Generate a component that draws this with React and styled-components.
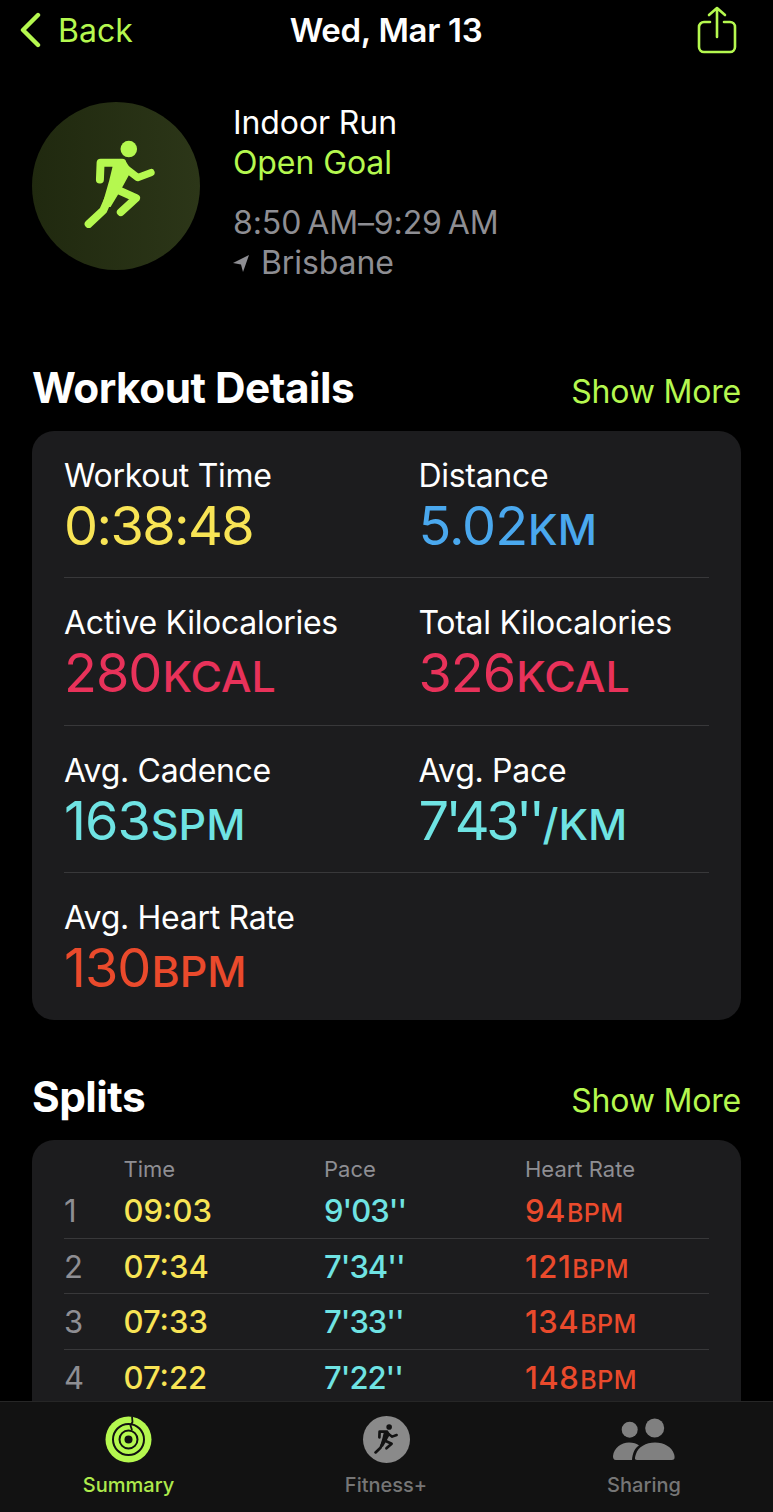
import React from 'react';
import styled, { createGlobalStyle } from 'styled-components';

const lime = '#b5f84f';
const yellow = '#f8e455';
const blue = '#4aa8ee';
const pink = '#e8325a';
const cyan = '#6fe3e3';
const orange = '#ea4a2c';

const GlobalStyle = createGlobalStyle`
  html, body { margin: 0; padding: 0; background: #000; }
  body { font-family: Inter, "Liberation Sans", sans-serif; -webkit-font-smoothing: antialiased; }
`;

const Page = styled.div`
  width: 773px;
  height: 1512px;
  display: flex;
  flex-direction: column;
  overflow: hidden;
  background: #000;
  color: #fff;
`;

const Scroll = styled.div`
  flex: 1;
  min-height: 0;
  overflow: hidden;
  padding: 0 32px;
`;

const NavBar = styled.div`
  height: 60px;
  margin: 0 -32px 2px;
  padding: 0 36px 0 19px;
  display: grid;
  grid-template-columns: 1fr auto 1fr;
  align-items: center;
`;

const BackLink = styled.div`
  display: flex;
  align-items: center;
  gap: 17px;
  color: ${lime};
  font-size: 32px;
`;

const NavTitle = styled.div`
  font-size: 33px;
  font-weight: 600;
  letter-spacing: -0.3px;
  margin-left: 16px;
`;

const ShareBox = styled.div`
  justify-self: end;
  display: flex;
`;

const Hero = styled.div`
  display: flex;
  gap: 33px;
  margin-top: 40px;
  padding-top: 2px;
`;

const Badge = styled.div`
  width: 168px;
  height: 168px;
  box-sizing: border-box;
  padding: 0 0 4px 6px;
  border-radius: 50%;
  background: linear-gradient(90deg, #20290f, #2c3618);
  display: flex;
  align-items: center;
  justify-content: center;
`;

const HeroText = styled.div`
  display: flex;
  flex-direction: column;
  padding-top: 1px;
`;

const HeroLine = styled.div`
  font-size: 32px;
  line-height: 40px;
  letter-spacing: -0.1px;
  word-spacing: ${(p) => p.$words || 0}px;
  color: ${(p) => p.$color || '#fff'};
  margin-top: ${(p) => p.$gap || 0}px;
  display: flex;
  align-items: center;
  gap: 12px;
`;

const SectionHead = styled.div`
  display: flex;
  justify-content: space-between;
  align-items: center;
  height: 48px;
  margin-top: ${(p) => p.$top}px;
  margin-bottom: 20px;
`;

const SectionTitle = styled.h2`
  margin: 0;
  font-size: 42.3px;
  font-weight: 700;
  letter-spacing: -0.5px;
`;

const ShowMore = styled.div`
  color: ${lime};
  font-size: 32px;
  letter-spacing: -0.2px;
  padding-top: 8px;
`;

const Card = styled.div`
  background: #1c1c1e;
  border-radius: 22px;
  padding: 0 32px ${(p) => p.$bottom || 0}px;
`;

const MetricRow = styled.div`
  display: grid;
  grid-template-columns: 354.5px 1fr;
  height: 147.25px;
  padding-top: 23px;
  box-sizing: border-box;
  border-bottom: ${(p) => (p.$last ? 'none' : '1px solid #38383a')};
`;

const Metric = styled.div`
  display: flex;
  flex-direction: column;
`;

const MetricLabel = styled.div`
  font-size: 32px;
  line-height: 43px;
  letter-spacing: -0.3px;
  color: #fff;
`;

const MetricValue = styled.div`
  font-size: 54px;
  line-height: 58px;
  letter-spacing: ${(p) => p.$track || -1}px;
  color: ${(p) => p.$color};
`;

const MetricUnit = styled.span`
  font-size: 43px;
  font-weight: 500;
  letter-spacing: 0;
  margin-left: 1px;
`;

const SplitHead = styled.div`
  display: grid;
  grid-template-columns: 59.5px 200.5px 201px 1fr;
  height: 43px;
  padding-bottom: 1px;
  box-sizing: border-box;
  align-items: end;
  font-size: 22px;
  color: #8e8e93;
`;

const SplitRow = styled.div`
  display: grid;
  grid-template-columns: 59.5px 200.5px 201px 1fr;
  align-items: center;
  height: 55.5px;
  padding-top: 1px;
  box-sizing: border-box;
  border-bottom: 1px solid #38383a;
  font-size: 31px;
`;

const SplitIndex = styled.div`
  color: #8e8e93;
`;

const SplitCell = styled.div`
  color: ${(p) => p.$color};
  font-weight: 500;
  letter-spacing: ${(p) => p.$track || 0}px;
`;

const SplitUnit = styled.span`
  font-size: 25px;
  font-weight: 500;
  margin-left: 1px;
`;

const TabBar = styled.div`
  height: 111px;
  flex-shrink: 0;
  background: #121212;
  border-top: 1px solid #262626;
  box-sizing: border-box;
  display: grid;
  grid-template-columns: 257px 258px 258px;
`;

const Tab = styled.div`
  display: flex;
  flex-direction: column;
  align-items: center;
  padding-top: 12px;
  color: ${(p) => (p.$active ? '#aeea4c' : '#767676')};
  font-size: 20px;
  font-weight: 500;
`;

const TabIcon = styled.div`
  height: 50px;
  display: flex;
  align-items: center;
  justify-content: center;
  margin-bottom: 9px;
`;

const TabDisc = styled.div`
  width: 47px;
  height: 47px;
  border-radius: 50%;
  background: #8a8a8a;
  display: flex;
  align-items: center;
  justify-content: center;
`;

const Chevron = () => (
  <svg width="22" height="36" viewBox="0 0 22 36" fill="none" stroke={lime} strokeWidth="4.4" strokeLinecap="round" strokeLinejoin="round">
    <path d="M19 3 L4 18 L19 33" />
  </svg>
);

const ShareIcon = () => (
  <svg width="40" height="48" viewBox="0 0 40 48" fill="none" stroke={lime} strokeWidth="2.6" strokeLinecap="round" strokeLinejoin="round">
    <path d="M13 16 H7 a5 5 0 0 0 -5 5 V41 a5 5 0 0 0 5 5 H33 a5 5 0 0 0 5 -5 V21 a5 5 0 0 0 -5 -5 H27" />
    <path d="M20 31 V2 M12 9 L20 2 L28 9" />
  </svg>
);

const Runner = ({ size, color }) => (
  <svg width={size} height={size * 1.25} viewBox="190 133 214 267" fill="none" stroke={color} strokeLinecap="round" strokeLinejoin="round">
    <circle cx="325" cy="160" r="25" fill={color} stroke="none" />
    <path d="M238 252 L240 201 H305" strokeWidth="24" />
    <path d="M312 215 L352 246 L392 231" strokeWidth="22" />
    <path d="M272 200 L315 195 L333 225 L300 285 L270 335 L243 335 L266 255 L276 213 Z" fill={color} stroke="none" />
    <path d="M268 300 L248 345 L204 386" strokeWidth="24" />
    <path d="M285 280 L347 308 L301 350" strokeWidth="24" />
  </svg>
);

const LocationArrow = () => (
  <svg width="16" height="17" viewBox="0 0 16 17" fill="#8e8e93">
    <path d="M16 0 L0 8 L8 9.5 L10 17 Z" />
  </svg>
);

const RingsIcon = () => (
  <svg width="47" height="47" viewBox="0 0 47 47">
    <circle cx="23.5" cy="23.5" r="23" fill={lime} />
    <circle cx="23.5" cy="23.5" r="15.5" fill="none" stroke="#121212" strokeWidth="2" />
    <circle cx="23.5" cy="23.5" r="9" fill="none" stroke="#121212" strokeWidth="2" />
    <circle cx="23.5" cy="23.5" r="4" fill="#121212" />
    <path d="M27 0.5 L27.5 6 L25.5 9.5 L27 14" fill="none" stroke="#121212" strokeWidth="1.8" />
  </svg>
);

const PeopleIcon = () => (
  <svg width="62" height="42" viewBox="0 0 62 42" fill="#808080">
    <circle cx="16.7" cy="11.7" r="8" />
    <circle cx="41.7" cy="10" r="9.5" />
    <path d="M3 42 C0.5 42 0 40 0 38 C1 30 8 24.5 16 24.5 C20 24.5 24 25.5 26 27.5 C22 30 19.5 35 19 42 Z" />
    <path d="M24 42 C21 42 22 39 23 36 C25 29 33 24.5 42 24.5 C51 24.5 59 29 61 36 C62 39 62 42 59 42 Z" />
  </svg>
);

const metrics = [
  [
    { label: 'Workout Time', value: '0:38:48', color: yellow, track: -1.6 },
    { label: 'Distance', value: '5.02', unit: 'KM', color: blue },
  ],
  [
    { label: 'Active Kilocalories', value: '280', unit: 'KCAL', color: pink },
    { label: 'Total Kilocalories', value: '326', unit: 'KCAL', color: pink },
  ],
  [
    { label: 'Avg. Cadence', value: '163', unit: 'SPM', color: cyan },
    { label: 'Avg. Pace', value: "7'43''", unit: '/KM', color: cyan, track: -3.5 },
  ],
  [{ label: 'Avg. Heart Rate', value: '130', unit: 'BPM', color: orange }],
];

const splits = [
  ['1', '09:03', "9'03''", '94'],
  ['2', '07:34', "7'34''", '121'],
  ['3', '07:33', "7'33''", '134'],
  ['4', '07:22', "7'22''", '148'],
];

export default function App() {
  return (
    <Page>
      <GlobalStyle />
      <Scroll>
        <NavBar>
          <BackLink><Chevron />Back</BackLink>
          <NavTitle>Wed, Mar 13</NavTitle>
          <ShareBox><ShareIcon /></ShareBox>
        </NavBar>

        <Hero>
          <Badge><Runner size={71} color={lime} /></Badge>
          <HeroText>
            <HeroLine>Indoor Run</HeroLine>
            <HeroLine $color={lime}>Open Goal</HeroLine>
            <HeroLine $color="#8e8e93" $gap={20} $words={-3}>8:50 AM–9:29 AM</HeroLine>
            <HeroLine $color="#8e8e93"><LocationArrow />Brisbane</HeroLine>
          </HeroText>
        </Hero>

        <SectionHead $top={80}>
          <SectionTitle>Workout Details</SectionTitle>
          <ShowMore>Show More</ShowMore>
        </SectionHead>
        <Card>
          {metrics.map((row, i) => (
            <MetricRow key={i} $last={i === metrics.length - 1}>
              {row.map((m) => (
                <Metric key={m.label}>
                  <MetricLabel>{m.label}</MetricLabel>
                  <MetricValue $color={m.color} $track={m.track}>
                    {m.value}
                    {m.unit && <MetricUnit>{m.unit}</MetricUnit>}
                  </MetricValue>
                </Metric>
              ))}
            </MetricRow>
          ))}
        </Card>

        <SectionHead $top={52}>
          <SectionTitle>Splits</SectionTitle>
          <ShowMore>Show More</ShowMore>
        </SectionHead>
        <Card $bottom={40}>
          <SplitHead>
            <span />
            <span>Time</span>
            <span>Pace</span>
            <span>Heart Rate</span>
          </SplitHead>
          {splits.map((s) => (
            <SplitRow key={s[0]}>
              <SplitIndex>{s[0]}</SplitIndex>
              <SplitCell $color={yellow}>{s[1]}</SplitCell>
              <SplitCell $color={cyan} $track={-1}>{s[2]}</SplitCell>
              <SplitCell $color={orange} $track={0.5}>{s[3]}<SplitUnit>BPM</SplitUnit></SplitCell>
            </SplitRow>
          ))}
        </Card>
      </Scroll>

      <TabBar>
        <Tab $active>
          <TabIcon><RingsIcon /></TabIcon>
          Summary
        </Tab>
        <Tab>
          <TabIcon><TabDisc><Runner size={24} color="#121212" /></TabDisc></TabIcon>
          Fitness+
        </Tab>
        <Tab>
          <TabIcon><PeopleIcon /></TabIcon>
          Sharing
        </Tab>
      </TabBar>
    </Page>
  );
}
